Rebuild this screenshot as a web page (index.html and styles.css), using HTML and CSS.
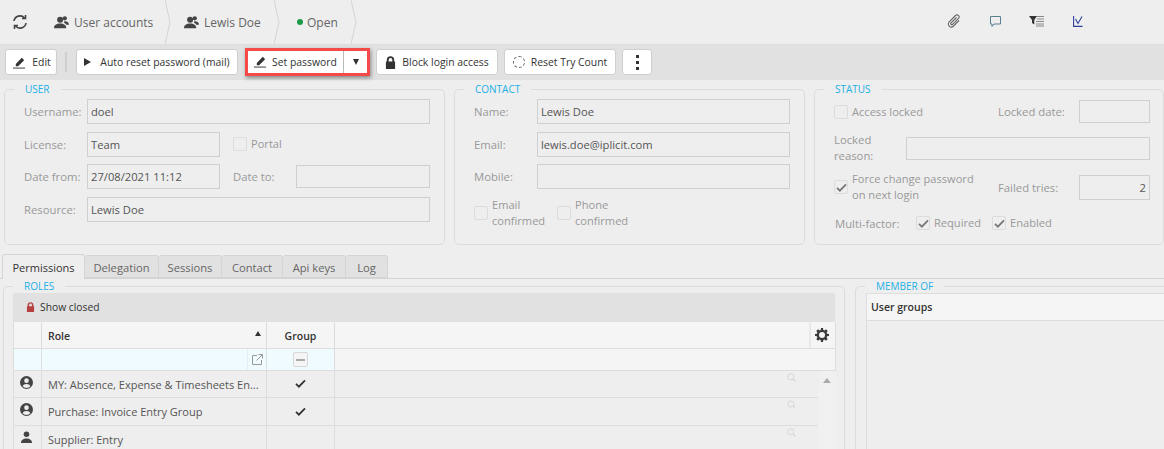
FILE: index.html
```html
<!DOCTYPE html>
<html lang="en">
<head>
    <meta charset="UTF-8">
    <title>User account</title>
    <link rel="stylesheet" href="styles.css">
</head>
<body>
    <svg class="defs" width="0" height="0">
        <symbol id="users" viewBox="0 0 16 16" fill="currentColor">
            <circle cx="6.500" cy="5" r="3.200"/>
            <path d="M0 14c0-3.400 2.600-5 6.500-5s6.500 1.600 6.500 5z"/>
            <circle cx="11.500" cy="3.500" r="2.300"/>
            <path d="M11 6.800c2.800-.4 5 .9 5 3.700h-3c-.5-1.200-1.300-2-2.600-2.500z"/>
        </symbol>
        <symbol id="pencil" viewBox="0 0 14 14" fill="currentColor">
            <path d="M3 8.500 9.500 2l2.500 2.500L5.500 11H3z"/>
            <path d="M0 12.500h13v1H0z"/>
        </symbol>
        <symbol id="lock" viewBox="0 0 12 14" fill="currentColor">
            <path d="M2 6V4.200a4 4 0 0 1 8 0V6h1v8H1V6zm2 0h4V4.200a2 2 0 0 0-4 0z"/>
        </symbol>
        <symbol id="check" viewBox="0 0 12 10">
            <path d="M1 5.500 4.200 8.500 11 1.500" fill="none" stroke="currentColor" stroke-width="2"/>
        </symbol>
        <symbol id="person-round" viewBox="0 0 14 14" fill="currentColor">
            <path d="M7 0a7 7 0 1 0 0 14A7 7 0 0 0 7 0zm0 2.500a2.500 2.500 0 1 1 0 5 2.500 2.500 0 0 1 0-5zM2.800 11c.6-1.700 2.200-2.500 4.200-2.500s3.600.8 4.200 2.500a5.500 5.500 0 0 1-8.400 0z"/>
        </symbol>
        <symbol id="person" viewBox="0 0 14 14" fill="currentColor">
            <circle cx="7" cy="3.500" r="3"/>
            <path d="M1 13c0-3.200 2.500-5 6-5s6 1.800 6 5z"/>
        </symbol>
        <symbol id="search" viewBox="0 0 10 10">
            <circle cx="4.300" cy="4.300" r="3.400" fill="none" stroke="currentColor"/>
            <path d="m6.800 6.800 2.500 2.500" stroke="currentColor" stroke-width="1.200"/>
        </symbol>
    </svg>

    <div class="topbar">
        <svg class="refresh" width="16" height="16" viewBox="0 0 16 16" fill="none" stroke="#444" stroke-width="1.600">
            <path d="M2 7a6 6 0 0 1 10.500-3"/>
            <path d="M14 9a6 6 0 0 1-10.500 3"/>
            <path d="M13.500 1v3.500H10M2.500 15v-3.500H6"/>
        </svg>
        <div class="crumb crumb-accounts">
            <svg class="crumb-icon" width="15" height="15"><use href="#users"/></svg>
            <span>User accounts</span>
        </div>
        <svg class="chevron" width="6" height="44" viewBox="0 0 6 44"><path d="M0 0 5 22 0 44" fill="none" stroke="#d4d4d4"/></svg>
        <div class="crumb crumb-person">
            <svg class="crumb-icon" width="15" height="15"><use href="#users"/></svg>
            <span>Lewis Doe</span>
        </div>
        <svg class="chevron" width="6" height="44" viewBox="0 0 6 44"><path d="M0 0 5 22 0 44" fill="none" stroke="#d4d4d4"/></svg>
        <div class="crumb crumb-state">
            <span class="dot"></span>
            <span>Open</span>
        </div>
        <svg class="chevron" width="6" height="44" viewBox="0 0 6 44"><path d="M0 0 5 22 0 44" fill="none" stroke="#d4d4d4"/></svg>

        <div class="top-icons">
            <svg class="icon-clip" width="14" height="14" viewBox="0 0 14 14" fill="none" stroke="#666" stroke-width="1.100">
                <path d="M12 6.500 6.500 12a3 3 0 0 1-4.300-4.200L8.500 1.500a2 2 0 0 1 3 2.800L5.500 10.300a1 1 0 0 1-1.500-1.400L9.500 3.500"/>
            </svg>
            <svg width="13" height="13" viewBox="0 0 13 13" fill="none" stroke="#5a7f92">
                <path d="M1.500 1.500h10v7.500H5L3 11.500V9H1.500z"/>
            </svg>
            <svg width="15" height="12" viewBox="0 0 15 12">
                <path d="M0 1h8L5.300 5v4.500L3 8V5z" fill="#333"/>
                <path d="M8 1.500h7M8 4h7M7 6.500h8M7 9h8M7 11h8" stroke="#888"/>
            </svg>
            <svg class="icon-tick" width="10" height="11" viewBox="0 0 10 11" fill="none" stroke="#2e3f9e" stroke-width="1.100">
                <path d="M.6 0v10.400H9.500"/>
                <path d="M2.500 3 5 7.500 9 .5"/>
            </svg>
        </div>
    </div>

    <div class="toolbar">
        <button class="btn btn-edit"><svg width="13" height="13"><use href="#pencil"/></svg>Edit</button>
        <span class="toolbar-sep"></span>
        <button class="btn btn-auto"><span class="play"></span>Auto reset password (mail)</button>
        <div class="highlight">
            <button class="split-main"><svg width="13" height="13"><use href="#pencil"/></svg>Set password</button>
            <button class="split-arrow"><span class="arrow-down"></span></button>
        </div>
        <button class="btn btn-block"><svg width="11" height="13"><use href="#lock"/></svg>Block login access</button>
        <button class="btn btn-reset"><span class="dashed-circle"></span>Reset Try Count</button>
        <button class="btn btn-more"><span class="dots"><i></i><i></i><i></i></span></button>
    </div>

    <div class="panels">
        <fieldset class="panel panel-user">
            <legend>USER</legend>
            <div class="form-row">
                <label>Username:</label>
                <div class="field field-wide">doel</div>
            </div>
            <div class="form-row">
                <label>License:</label>
                <div class="field field-half">Team</div>
                <span class="check-item check-portal"><span class="checkbox"></span>Portal</span>
            </div>
            <div class="form-row">
                <label>Date from:</label>
                <div class="field field-half">27/08/2021 11:12</div>
                <label class="label-dateto">Date to:</label>
                <div class="field field-dateto"></div>
            </div>
            <div class="form-row">
                <label>Resource:</label>
                <div class="field field-wide">Lewis Doe</div>
            </div>
        </fieldset>

        <fieldset class="panel panel-contact">
            <legend>CONTACT</legend>
            <div class="form-row">
                <label>Name:</label>
                <div class="field field-wide">Lewis Doe</div>
            </div>
            <div class="form-row">
                <label>Email:</label>
                <div class="field field-wide">lewis.doe@iplicit.com</div>
            </div>
            <div class="form-row">
                <label>Mobile:</label>
                <div class="field field-wide"></div>
            </div>
            <div class="confirm-row">
                <span class="check-item check-email"><span class="checkbox"></span><span>Email<br>confirmed</span></span>
                <span class="check-item"><span class="checkbox"></span><span>Phone<br>confirmed</span></span>
            </div>
        </fieldset>

        <fieldset class="panel panel-status">
            <legend>STATUS</legend>
            <div class="status-top">
                <span class="check-item check-access"><span class="checkbox"></span>Access locked</span>
                <label class="label-locked">Locked date:</label>
                <div class="field field-locked"></div>
            </div>
            <div class="status-reason">
                <label>Locked<br>reason:</label>
                <div class="field field-reason"></div>
            </div>
            <div class="status-force">
                <span class="check-item check-force">
                    <span class="checkbox"><svg width="11" height="9"><use href="#check"/></svg></span>
                    <span>Force change password<br>on next login</span>
                </span>
                <label class="label-failed">Failed tries:</label>
                <div class="field field-failed">2</div>
            </div>
            <div class="status-multi">
                <label class="label-multi">Multi-factor:</label>
                <span class="check-item check-required"><span class="checkbox"><svg width="11" height="9"><use href="#check"/></svg></span>Required</span>
                <span class="check-item"><span class="checkbox"><svg width="11" height="9"><use href="#check"/></svg></span>Enabled</span>
            </div>
        </fieldset>
    </div>

    <div class="tabs">
        <div class="tab tab-active">Permissions</div>
        <div class="tab tab-delegation">Delegation</div>
        <div class="tab tab-sessions">Sessions</div>
        <div class="tab tab-contact">Contact</div>
        <div class="tab tab-api">Api keys</div>
        <div class="tab tab-log">Log</div>
    </div>

    <div class="lower">
        <fieldset class="panel panel-roles">
            <legend>ROLES</legend>
            <div class="roles-toolbar">
                <svg class="closed-lock" width="9" height="10"><use href="#lock"/></svg>
                Show closed
            </div>
            <table class="grid">
                <colgroup>
                    <col class="col-icon"><col class="col-role"><col class="col-group"><col>
                </colgroup>
                <tr class="head-row">
                    <th></th>
                    <th class="th-role">Role<span class="sort-up"></span></th>
                    <th>Group</th>
                    <th class="th-gear">
                        <svg class="gear" width="14" height="14" viewBox="0 0 14 14">
                            <path d="M6 0h2l.3 1.900 1.200.5L11 1.300l1.700 1.700-1.100 1.500.5 1.200L14 6v2l-1.900.3-.5 1.200 1.100 1.500-1.700 1.700-1.500-1.100-1.200.5L8 14H6l-.3-1.900-1.200-.5L3 12.700 1.300 11l1.100-1.500-.5-1.200L0 8V6l1.900-.3.5-1.200L1.300 3 3 1.300l1.500 1.100 1.200-.5zM7 4a3 3 0 1 0 0 6 3 3 0 0 0 0-6z" fill="#3a3a3a" fill-rule="evenodd"/>
                        </svg>
                    </th>
                </tr>
                <tr class="filter-row">
                    <td class="filter-cell"></td>
                    <td class="filter-cell filter-role">
                        <span class="open-box">
                            <svg width="11" height="11" viewBox="0 0 11 11" fill="none" stroke="#999">
                                <path d="M5 1.500H.5v9h9V6M4.500 6.500 10 1M6.500.5h4v4"/>
                            </svg>
                        </span>
                    </td>
                    <td class="filter-cell filter-group"><span class="minus-box"><i></i></span></td>
                    <td class="filter-rest"></td>
                </tr>
                <tr class="data-row">
                    <td class="icon-cell"><svg width="13" height="13"><use href="#person-round"/></svg></td>
                    <td><div class="role-name">MY: Absence, Expense &amp; Timesheets En...</div></td>
                    <td class="group-cell"><svg width="11" height="9"><use href="#check"/></svg></td>
                    <td class="rest-cell"><svg class="search" width="9" height="9"><use href="#search"/></svg><span class="scroll-strip"><span class="scroll-up"></span></span></td>
                </tr>
                <tr class="data-row">
                    <td class="icon-cell"><svg width="13" height="13"><use href="#person-round"/></svg></td>
                    <td><div class="role-name">Purchase: Invoice Entry Group</div></td>
                    <td class="group-cell"><svg width="11" height="9"><use href="#check"/></svg></td>
                    <td class="rest-cell"><svg class="search" width="9" height="9"><use href="#search"/></svg><span class="scroll-strip"></span></td>
                </tr>
                <tr class="data-row">
                    <td class="icon-cell"><svg width="13" height="13"><use href="#person"/></svg></td>
                    <td><div class="role-name">Supplier: Entry</div></td>
                    <td class="group-cell"></td>
                    <td class="rest-cell"><svg class="search" width="9" height="9"><use href="#search"/></svg><span class="scroll-strip"></span></td>
                </tr>
            </table>
        </fieldset>

        <fieldset class="panel panel-member">
            <legend>MEMBER OF</legend>
            <div class="member-box">
                <div class="member-head">User groups</div>
            </div>
        </fieldset>
    </div>
</body>
</html>
```

FILE: styles.css
```css
* {
    box-sizing: border-box;
}
html, body {
    height: 449px;
    overflow: hidden;
}
body {
    margin: 0;
    background: #eeeeee;
    font-family: "Open Sans", sans-serif;
    font-size: 11.3px;
    color: #555;
}
.defs {
    position: absolute;
}
svg {
    flex: none;
}

/* top bar */
.topbar {
    height: 45px;
    display: flex;
    align-items: center;
    border-bottom: 1px solid #dddddd;
    font-size: 12px;
    color: #666;
    padding-left: 12px;
}
.refresh {
    margin-right: 26px;
}
.crumb {
    display: flex;
    align-items: center;
    gap: 5px;
}
.crumb-icon {
    color: #444;
}
.crumb-accounts {
    width: 111px;
}
.crumb-person {
    width: 90px;
    margin-left: 13px;
}
.crumb-state {
    width: 54px;
    margin-left: 17px;
    gap: 4px;
}
.chevron {
    margin-top: -1px;
}
.dot {
    width: 6px;
    height: 6px;
    border-radius: 50%;
    background: #1c9a4a;
}
.top-icons {
    margin-left: 590px;
    display: flex;
    align-items: center;
    gap: 27px;
    margin-top: -2px;
}
.icon-clip {
    margin-right: 1px;
}
.icon-tick {
    margin-left: 2px;
}

/* toolbar */
.toolbar {
    height: 35px;
    background: #e1e1e1;
    display: flex;
    align-items: center;
    padding: 0 0 1px 5px;
}
.btn {
    height: 26px;
    background: #fff;
    border: 1px solid #cfcfcf;
    border-radius: 3px;
    display: flex;
    align-items: center;
    justify-content: center;
    gap: 6px;
    font: 10.4px "Open Sans", sans-serif;
    color: #333;
    padding: 0;
}
.btn svg {
    color: #333;
}
.btn-edit {
    width: 52px;
    padding-left: 2px;
}
.toolbar-sep {
    width: 2px;
    height: 20px;
    background: #cfcfcf;
    margin: 0 9px 0 8px;
}
.btn-auto {
    width: 162px;
    gap: 9px;
}
.play {
    width: 0;
    height: 0;
    border-left: 7px solid #333;
    border-top: 4px solid transparent;
    border-bottom: 4px solid transparent;
}
.highlight {
    width: 125px;
    height: 28px;
    margin: -1px 6px 0 7px;
    border: 3px solid #f44a4a;
    background: #fff;
    display: flex;
    box-shadow: 1px 2px 4px rgba(0, 0, 0, 0.4);
}
.split-main, .split-arrow {
    border: 0;
    background: #fff;
    padding: 0;
    height: 22px;
    display: flex;
    align-items: center;
    font: 10.4px "Open Sans", sans-serif;
    color: #333;
}
.split-main {
    width: 96px;
    gap: 5px;
    justify-content: center;
    border-right: 1px solid #bbb;
}
.split-arrow {
    flex: 1;
    justify-content: center;
}
.arrow-down {
    width: 0;
    height: 0;
    border-top: 6px solid #333;
    border-left: 3.500px solid transparent;
    border-right: 3.500px solid transparent;
}
.btn-block {
    width: 122px;
}
.btn-reset {
    width: 112px;
    margin-left: 6px;
}
.dashed-circle {
    width: 12px;
    height: 12px;
    border: 1px dashed #666;
    border-radius: 50%;
}
.btn-more {
    width: 30px;
    margin-left: 6px;
}
.dots {
    display: flex;
    flex-direction: column;
    gap: 3px;
}
.dots i {
    display: block;
    width: 3px;
    height: 3px;
    background: #333;
}

/* panels */
.panels {
    display: flex;
    padding: 2px 0 0 4px;
    gap: 9px;
    height: 173px;
}
.panel {
    margin: 0;
    min-width: 0;
    flex: none;
    border: 1px solid #dcdcdc;
    border-radius: 5px;
    padding: 0;
}
.panel legend {
    margin-left: 9px;
    padding: 0 11px;
    font-size: 10px;
    line-height: 14px;
    color: #22b0e6;
}
.panel-user {
    width: 441px;
    height: 163px;
}
.panel-contact {
    width: 351px;
    height: 163px;
}
.panel-status {
    width: 350px;
    height: 163px;
}
label {
    color: #999;
    display: block;
}
.form-row {
    display: flex;
    align-items: center;
    height: 25px;
    margin: 3px 0 7.500px 19px;
}
.form-row > label:first-child {
    width: 63px;
}
.field {
    height: 25px;
    line-height: 23px;
    border: 1px solid #cfcfcf;
    padding: 0 3px;
    color: #555;
    font-size: 11.200px;
}
.field-wide {
    flex: none;
    width: 343px;
}
.panel-contact .field-wide {
    width: 253px;
}
.field-half {
    width: 133px;
}
.label-dateto {
    width: 63px;
    margin-left: 13px;
}
.field-dateto {
    width: 134px;
    height: 23px;
}
.check-item {
    display: inline-flex;
    align-items: center;
    gap: 4px;
    color: #999;
    font-size: 11.100px;
    line-height: 16px;
}
.checkbox {
    width: 14px;
    height: 14px;
    border: 1px solid #dcdcdc;
    border-radius: 2px;
    display: flex;
    align-items: center;
    justify-content: center;
    color: #777;
    flex: none;
}
.check-portal {
    margin-left: 13px;
}
.confirm-row {
    display: flex;
    margin: 1px 0 0 19px;
}
.check-email {
    width: 83px;
}

/* status */
.status-top, .status-force, .status-multi, .status-reason {
    display: flex;
    align-items: center;
    margin-left: 19px;
}
.status-top {
    height: 23px;
    margin-top: 4px;
}
.check-access {
    width: 164px;
}
.label-locked {
    width: 81px;
}
.field-locked {
    width: 71px;
    height: 23px;
}
.status-reason {
    margin-top: 9px;
    line-height: 16px;
}
.status-reason label {
    width: 72px;
}
.field-reason {
    width: 244px;
    height: 23px;
}
.status-force {
    margin-top: 7px;
}
.check-force {
    width: 164px;
}
.label-failed {
    width: 81px;
}
.field-failed {
    width: 71px;
    text-align: right;
    color: #555;
}
.status-multi {
    margin-top: 12px;
    margin-left: 20px;
}
.label-multi {
    width: 81px;
}
.check-required {
    width: 76px;
}

/* tabs */
.tabs {
    display: flex;
    align-items: flex-end;
    height: 26px;
    padding-left: 2px;
    border-bottom: 1px solid #d4d4d4;
}
.tab {
    height: 23px;
    line-height: 23px;
    text-align: center;
    background: #e1e1e1;
    border: 1px solid #d4d4d4;
    border-left: 0;
    border-radius: 3px 3px 0 0;
    color: #666;
    font-size: 11.200px;
}
.tab-active {
    height: 25px;
    line-height: 26px;
    margin-bottom: -1px;
    width: 83px;
    background: #eeeeee;
    border-left: 1px solid #d4d4d4;
    border-bottom: 0;
    color: #333;
    font-size: 11px;
}
.tab-delegation {
    width: 74px;
}
.tab-sessions {
    width: 63px;
}
.tab-contact {
    width: 61px;
}
.tab-api {
    width: 63px;
}
.tab-log {
    width: 42px;
}

/* roles and member of */
.lower {
    display: flex;
    padding-left: 3px;
    gap: 10px;
}
.panel-roles {
    width: 842px;
    height: 185px;
    padding: 0 9px;
}
.panel-roles legend {
    margin-left: 0;
}
.panel-member {
    width: 320px;
    height: 185px;
    padding: 0 0 0 10px;
}
.panel-member legend {
    margin-left: -1px;
}
.roles-toolbar {
    height: 29px;
    background: #e1e1e1;
    display: flex;
    align-items: center;
    gap: 5px;
    padding: 0 0 2px 13px;
    font-size: 10.300px;
    color: #333;
}
.closed-lock {
    color: #b5403f;
}
.grid {
    width: 823px;
    border-collapse: collapse;
    table-layout: fixed;
}
.col-icon {
    width: 28px;
}
.col-role {
    width: 225px;
}
.col-group {
    width: 68px;
}
.grid th {
    height: 26px;
    background: #f5f5f5;
    border: 1px solid #dddddd;
    border-top: 0;
    font-size: 10.500px;
    font-weight: 600;
    color: #333;
    padding: 2px 0 0;
}
.grid .th-role {
    text-align: left;
    padding-left: 6px;
    position: relative;
}
.sort-up {
    position: absolute;
    right: 5px;
    top: 9px;
    width: 0;
    height: 0;
    border-bottom: 5px solid #333;
    border-left: 3px solid transparent;
    border-right: 3px solid transparent;
}
.grid .th-gear {
    text-align: right;
    padding: 0 6px 0 0;
    background: linear-gradient(to right, #f5f5f5 474px, #ddd 474px, #ddd 475px, #f5f5f5 475px);
}
.gear {
    display: inline-block;
    vertical-align: middle;
}
.grid td {
    padding: 0;
    border: 1px solid #dddddd;
    border-top: 0;
}
.filter-row td {
    height: 22px;
}
.grid .filter-cell {
    background: #f0fbff;
}
.grid .filter-rest {
    background: #f5f5f5;
}
.filter-role {
    text-align: right;
}
.open-box {
    display: inline-flex;
    width: 19px;
    height: 21px;
    align-items: center;
    justify-content: center;
    border-left: 1px solid #e4eef2;
    vertical-align: middle;
}
.filter-group {
    text-align: center;
}
.minus-box {
    display: inline-flex;
    width: 15px;
    height: 15px;
    align-items: center;
    justify-content: center;
    border: 1px solid #d8d8d8;
    border-radius: 2px;
    background: #f5f5f5;
    vertical-align: middle;
}
.minus-box i {
    width: 9px;
    height: 2px;
    background: #aaa;
}
.data-row td {
    height: 27.500px;
}
.icon-cell {
    color: #444;
}
.icon-cell svg {
    display: block;
    margin: -3px 0 0 6px;
}
.role-name {
    padding: 1px 6px 0;
    white-space: nowrap;
    font-size: 11px;
}
.group-cell {
    text-align: center;
    color: #333;
}
.grid .rest-cell {
    position: relative;
}
.search {
    position: absolute;
    left: 452px;
    top: 2px;
    color: #d4d4d4;
}
.scroll-strip {
    position: absolute;
    left: 483px;
    right: -1px;
    top: 0;
    bottom: -1px;
    background: #f0f0f0;
}
.scroll-up {
    position: absolute;
    left: 5px;
    top: 7px;
    width: 0;
    height: 0;
    border-bottom: 5px solid #aaa;
    border-left: 4px solid transparent;
    border-right: 4px solid transparent;
}
.member-box {
    height: 175px;
    border: 1px solid #dddddd;
    border-right: 0;
}
.member-head {
    height: 27px;
    line-height: 26px;
    background: #f5f5f5;
    border-bottom: 1px solid #dddddd;
    padding-left: 4px;
    font-size: 10.500px;
    font-weight: 600;
    color: #333;
}
```
